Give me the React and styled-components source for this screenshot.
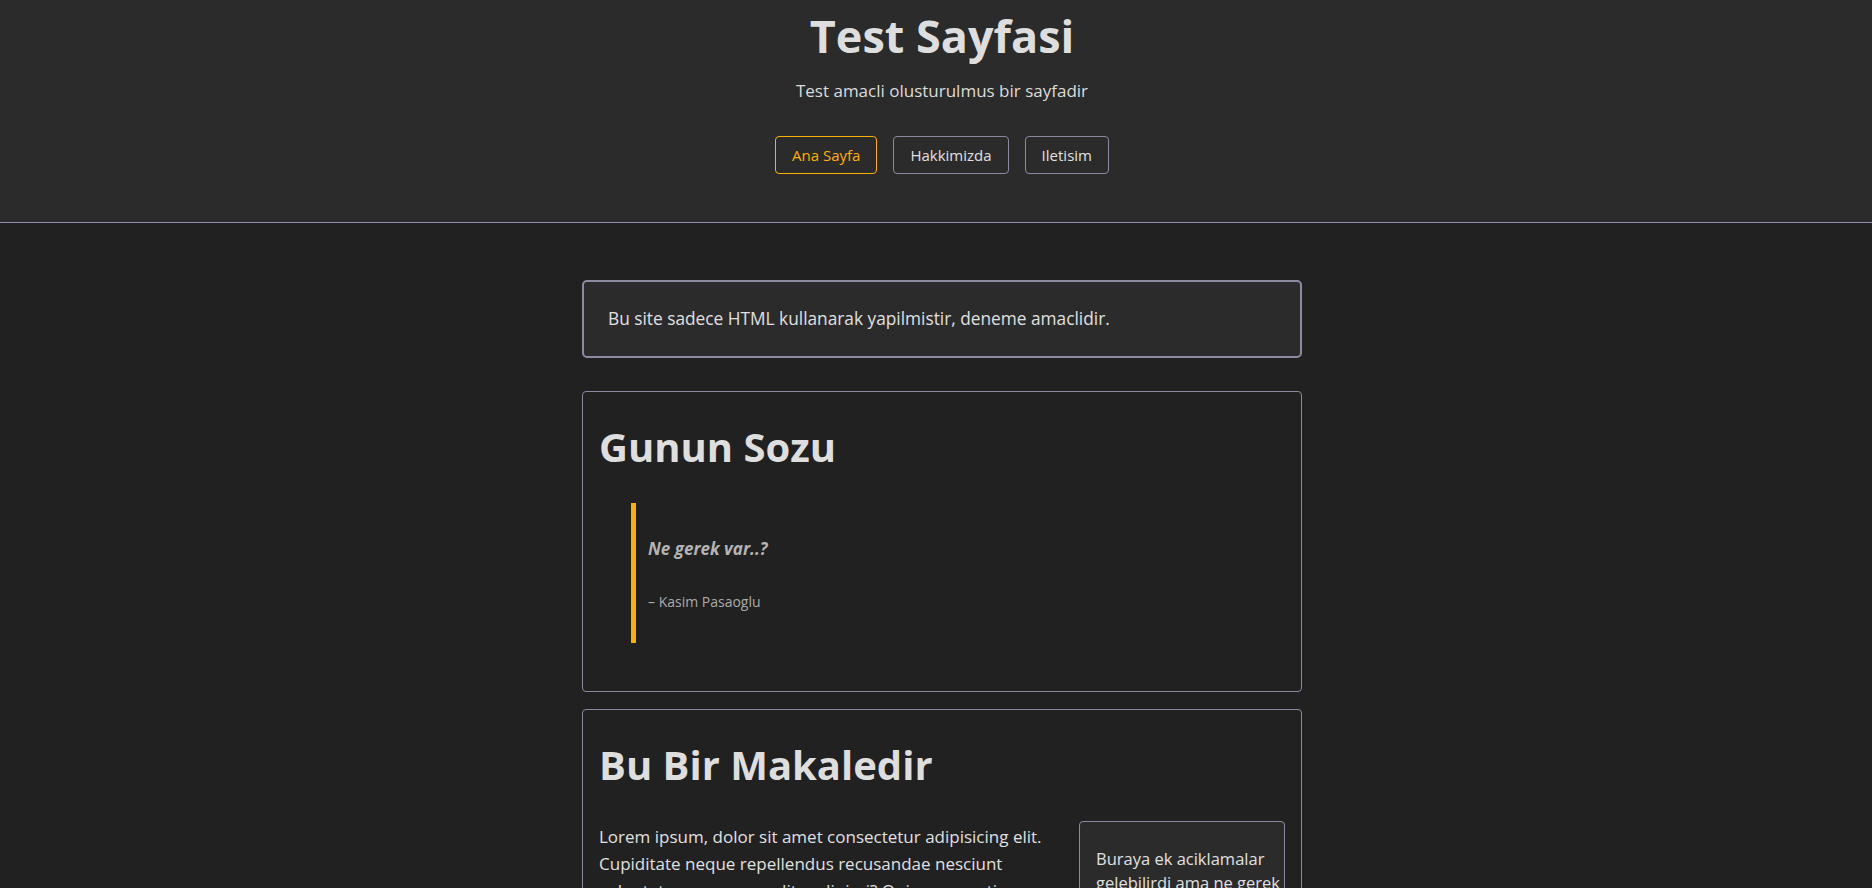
import React from 'react';
import styled, { createGlobalStyle } from 'styled-components';

const GlobalStyle = createGlobalStyle`
  body {
    margin: 0;
    background: #212121;
    color: #dedede;
    font-family: "Open Sans", "Noto Sans", sans-serif;
  }
`

const links = [
  { title: 'Ana Sayfa', active: true },
  { title: 'Hakkimizda' },
  { title: 'Iletisim' },
]

export default function App() {
  return <Page>
    <GlobalStyle />
    <Header>
      <Inner>
        <Title>Test Sayfasi</Title>
        <Subtitle>Test amacli olusturulmus bir sayfadir</Subtitle>
        <Nav>
          {links.map(l => <NavLink key={l.title} active={l.active}>{l.title}</NavLink>)}
        </Nav>
      </Inner>
    </Header>
    <Main>
      <Notice>Bu site sadece HTML kullanarak yapilmistir, deneme amaclidir.</Notice>
      <Card>
        <Heading>Gunun Sozu</Heading>
        <Quote>
          <QuoteText>Ne gerek var..?</QuoteText>
          <Author>– Kasim Pasaoglu</Author>
        </Quote>
      </Card>
      <Card>
        <Heading>Bu Bir Makaledir</Heading>
        <Article>
          <Aside>
            <AsideText>Buraya ek aciklamalar gelebilirdi ama ne gerek var..?</AsideText>
          </Aside>
          <Body>
            Lorem ipsum, dolor sit amet consectetur adipisicing elit.
            Cupiditate neque repellendus recusandae nesciunt voluptatem
            quos expedita adipisci? Quis praesentium veritatis, iusto
            dolorem quae ipsam mollitia nemo accusantium eius assumenda.
          </Body>
        </Article>
      </Card>
    </Main>
  </Page>
}

const Page = styled.div`
  min-height: 100vh;
`
const Header = styled.header`
  background: #2b2b2b;
  border-bottom: 1px solid #9292ae;
`
const Inner = styled.div`
  padding: 9px 0 48px 12px;
  text-align: center;
`
const Title = styled.h1`
  margin: 0;
  font-size: 45px;
  line-height: 1.2;
  font-weight: 700;
  color: #dedede;
`
const Subtitle = styled.p`
  margin: 15px 0 0;
  font-size: 17px;
  line-height: 1.5;
  color: #dcdcdc;
`
const Nav = styled.nav`
  margin-top: 32px;
  display: flex;
  justify-content: center;
  gap: 16px;
`
const NavLink = styled.a`
  display: inline-block;
  box-sizing: border-box;
  height: 38px;
  line-height: 36px;
  padding: 0 16px;
  font-size: 15px;
  border-radius: 4px;
  border: 1px solid ${p => p.active ? '#ffb000' : '#8a8aa2'};
  color: ${p => p.active ? '#ffb000' : '#e0e0e0'};
  cursor: pointer;
`
const Main = styled.main`
  width: 720px;
  margin: 0 auto;
  padding: 57px 0 40px 12px;
  display: flex;
  flex-direction: column;
`
const Notice = styled.div`
  background: #2b2b2b;
  border: 2px solid #8b8ba3;
  border-radius: 5px;
  padding: 24px;
  font-size: 17.3px;
  line-height: 26px;
  color: #e0e0e0;
  margin-bottom: 33px;
`
const Card = styled.section`
  border: 1px solid #8a8aa0;
  border-radius: 4px;
  padding: 16px;
  margin-bottom: 17px;
`
const Heading = styled.h2`
  margin: 15.5px 0 31.5px;
  font-size: 40px;
  line-height: 48px;
  font-weight: 700;
  color: #dedede;
`
const Quote = styled.blockquote`
  margin: 0 0 32px 32px;
  padding: 16px 12px;
  border-left: 5px solid #ffb000;
`
const QuoteText = styled.p`
  margin: 16px 0 0;
  font-size: 17px;
  line-height: 27px;
  font-weight: 700;
  font-style: italic;
  color: #b4b4b4;
`
const Author = styled.p`
  margin: 29px 0 14px;
  font-size: 14px;
  line-height: 22px;
  color: #ababab;
`
const Article = styled.div`
  display: flow-root;
`
const Aside = styled.aside`
  float: right;
  box-sizing: border-box;
  width: 206px;
  margin-left: 16px;
  padding: 8px 3px 8px 16px;
  background: #2b2b2b;
  border: 1px solid #8a8aa0;
  border-radius: 4px;
`
const AsideText = styled.p`
  margin: 17px 0 16px;
  font-size: 16.5px;
  line-height: 24px;
  color: #e0e0e0;
`
const Body = styled.p`
  margin: 0;
  padding-top: 2px;
  font-size: 17px;
  line-height: 27px;
  color: #e0e0e0;
`
